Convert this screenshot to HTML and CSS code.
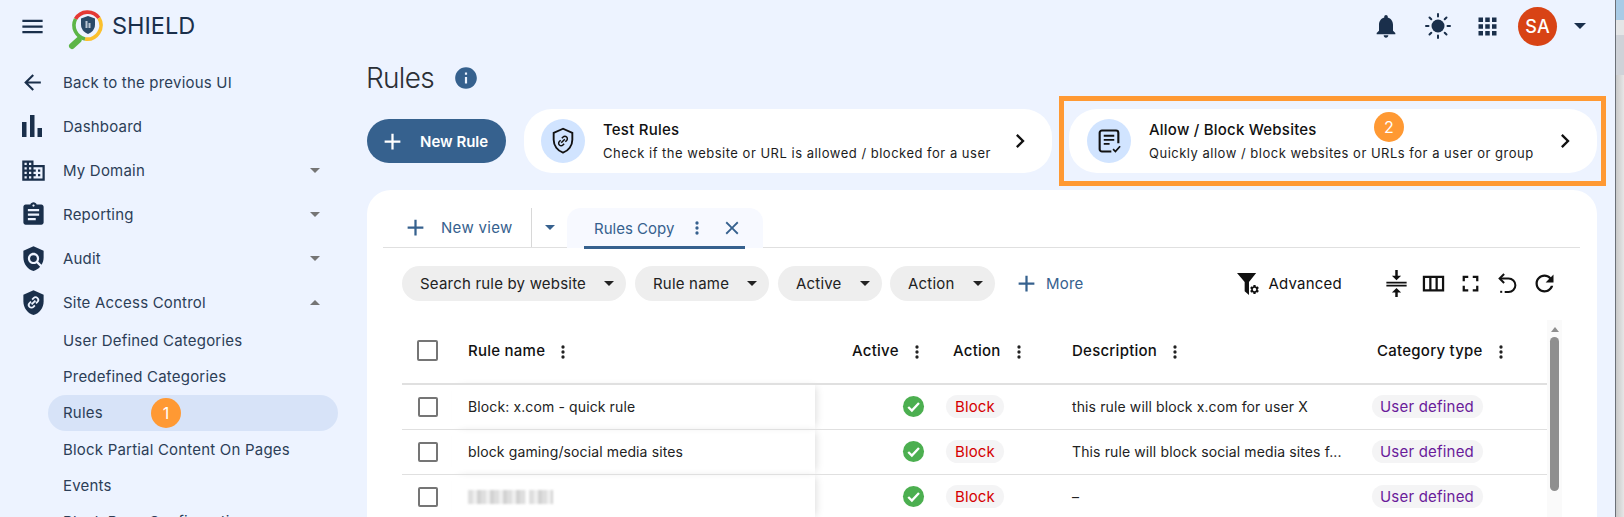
FILE: index.html
```html
<!DOCTYPE html>
<html lang="en">
<head>
<meta charset="utf-8">
<title>SHIELD - Rules</title>
<link rel="stylesheet" href="styles.css">
</head>
<body>
<svg class="defs" width="0" height="0" aria-hidden="true">
  <symbol id="i-plus" viewBox="0 0 24 24"><path d="M19 13h-6v6h-2v-6H5v-2h6V5h2v6h6v2z"/></symbol>
  <symbol id="i-kebab" viewBox="0 0 24 24"><circle cx="12" cy="6" r="2"/><circle cx="12" cy="12" r="2"/><circle cx="12" cy="18" r="2"/></symbol>
  <symbol id="i-chevron" viewBox="0 0 24 24"><path d="M10 6 8.59 7.41 13.17 12l-4.58 4.59L10 18l6-6z"/></symbol>
  <symbol id="i-check" viewBox="0 0 24 24"><circle cx="12" cy="12" r="11" fill="#4caf50"/><path d="M6.5 12.5l3.8 3.8 7.4-8" fill="none" stroke="#fff" stroke-width="2.4"/></symbol>
</svg>
<div class="screen">
  <div class="window">
    <header class="topbar">
      <svg class="ic-menu" viewBox="0 0 24 24"><path d="M3 18h18v-2H3v2zm0-5h18v-2H3v2zm0-7v2h18V6H3z"/></svg>
      <svg class="logo" viewBox="0 0 36 36">
        <path d="M11.6 31 5 37" stroke="#5cb547" stroke-width="6" stroke-linecap="round" fill="none"/>
        <path d="M8.5 10A14 14 0 0 1 32 9" stroke="#e53935" stroke-width="3.6" fill="none"/>
        <path d="M32 9A14 14 0 0 1 18 30" stroke="#fbc02d" stroke-width="3.6" fill="none"/>
        <path d="M18 30A14 14 0 0 1 8.5 10" stroke="#5cb547" stroke-width="3.6" fill="none"/>
        <path d="M21 7l7 2.6v6c0 4.500-3 8-7 9.500-4-1.500-7-5-7-9.500v-6z" fill="#2a4a68"/>
        <path d="M18.500 12h2v7h-2zM21.500 14h2v5h-2z" fill="#b9c6d4"/>
      </svg>
      <span class="brand">SHIELD</span>
      <div class="top-actions">
        <svg class="ic-bell" viewBox="0 0 24 24"><path d="M12 22c1.100 0 2-.9 2-2h-4c0 1.100.89 2 2 2zm6-6v-5c0-3.070-1.640-5.640-4.500-6.320V4c0-.83-.67-1.500-1.500-1.500s-1.500.67-1.500 1.500v.68C7.630 5.360 6 7.920 6 11v5l-2 2v1h16v-1l-2-2z"/></svg>
        <svg class="ic-sun" viewBox="0 0 26 26"><circle cx="13" cy="13" r="6.500"/><path d="M13 1v2.500M13 22.500V25M1 13h2.500M22.500 13H25M4.500 4.500l1.800 1.800M19.700 19.700l1.800 1.800M4.500 21.500l1.800-1.800M19.700 6.300l1.800-1.800" stroke="#1a2f4b" stroke-width="2" stroke-linecap="round"/></svg>
        <svg class="ic-apps" viewBox="0 0 24 24"><path d="M4 8h4V4H4v4zm6 12h4v-4h-4v4zm-6 0h4v-4H4v4zm0-6h4v-4H4v4zm6 0h4v-4h-4v4zm6-10v4h4V4h-4zm-6 4h4V4h-4v4zm6 6h4v-4h-4v4zm0 6h4v-4h-4v4z"/></svg>
        <span class="avatar">SA</span>
        <span class="caret caret-top"></span>
      </div>
    </header>
    <div class="body">
      <nav class="sidebar">
        <a class="nav-item"><svg class="nav-ic back" viewBox="0 0 24 24"><path d="M20 11H7.830l5.590-5.590L12 4l-8 8 8 8 1.410-1.410L7.830 13H20v-2z"/></svg><span>Back to the previous UI</span></a>
        <a class="nav-item"><svg class="nav-ic bars" viewBox="0 0 24 24"><path d="M2 7h4.500V22H2zM10 0h4.500V22H10zM17.500 13H22v9h-4.500z"/></svg><span>Dashboard</span></a>
        <a class="nav-item"><svg class="nav-ic" viewBox="0 0 24 24"><path d="M12 7V3H2v18h20V7H12zM6 19H4v-2h2v2zm0-4H4v-2h2v2zm0-4H4V9h2v2zm0-4H4V5h2v2zm4 12H8v-2h2v2zm0-4H8v-2h2v2zm0-4H8V9h2v2zm0-4H8V5h2v2zm10 12h-8v-2h2v-2h-2v-2h2v-2h-2V9h8v10zm-2-8h-2v2h2v-2zm0 4h-2v2h2v-2z"/></svg><span>My Domain</span><i class="caret"></i></a>
        <a class="nav-item"><svg class="nav-ic" viewBox="0 0 24 24"><path d="M19 3h-4.180C14.400 1.840 13.300 1 12 1c-1.300 0-2.400.84-2.820 2H5c-1.100 0-2 .9-2 2v14c0 1.100.9 2 2 2h14c1.100 0 2-.9 2-2V5c0-1.100-.9-2-2-2zm-7 0c.55 0 1 .45 1 1s-.45 1-1 1-1-.45-1-1 .45-1 1-1zm2 14H7v-2h7v2zm3-4H7v-2h10v2zm0-4H7V7h10v2z"/></svg><span>Reporting</span><i class="caret"></i></a>
        <a class="nav-item"><svg class="nav-ic" viewBox="0 0 24 24"><path d="M21 5l-9-4-9 4v6c0 5.550 3.840 10.740 9 12 2.300-.56 4.330-1.900 5.880-3.710l-3.120-3.120c-1.940 1.290-4.580 1.070-6.290-.64-1.950-1.950-1.950-5.120 0-7.070 1.950-1.950 5.120-1.950 7.070 0 1.710 1.710 1.920 4.350.64 6.290l2.900 2.900C20.290 15.690 21 13.380 21 11V5z"/><circle cx="12" cy="12" r="3"/></svg><span>Audit</span><i class="caret"></i></a>
        <a class="nav-item"><svg class="nav-ic" viewBox="0 0 24 24"><path d="M12 1 3 5v6c0 5.550 3.840 10.740 9 12 5.160-1.260 9-6.450 9-12V5z"/><path d="M9.800 11.200l-1.300 1.300a2.400 2.400 0 0 0 3.400 3.400l1.300-1.300M14.200 12.800l1.300-1.300a2.400 2.400 0 0 0-3.400-3.400l-1.300 1.300M10.300 13.700l3.400-3.400" fill="none" stroke="#edf3ff" stroke-width="1.600"/></svg><span>Site Access Control</span><i class="caret up"></i></a>
        <div class="subnav">
          <a class="sub-item">User Defined Categories</a>
          <a class="sub-item">Predefined Categories</a>
          <a class="sub-item active">Rules<b class="badge badge-one">1</b></a>
          <a class="sub-item">Block Partial Content On Pages</a>
          <a class="sub-item">Events</a>
          <a class="sub-item">Block Page Configuration</a>
        </div>
      </nav>
      <main class="main">
        <div class="title-row">
          <h1>Rules</h1>
          <svg class="ic-info" viewBox="0 0 24 24"><path d="M12 2C6.480 2 2 6.480 2 12s4.480 10 10 10 10-4.480 10-10S17.520 2 12 2zm1 15h-2v-6h2v6zm0-8h-2V7h2v2z"/></svg>
        </div>
        <div class="action-row">
          <button class="new-rule"><svg viewBox="0 0 24 24"><use href="#i-plus"/></svg>New Rule</button>
          <div class="promo promo-test">
            <span class="promo-ic"><svg viewBox="0 0 24 24"><path d="M12 1.500 4 5v6c0 5 3.300 9.500 8 11 4.700-1.500 8-6 8-11V5z" fill="none" stroke="#111" stroke-width="1.600"/><path d="M10 11.300l-1.100 1.100a2.100 2.100 0 0 0 3 3l1.100-1.100M14 12.700l1.100-1.100a2.100 2.100 0 0 0-3-3L11 9.700M10.500 13.500l3-3" fill="none" stroke="#111" stroke-width="1.300"/></svg></span>
            <div class="promo-text"><strong>Test Rules</strong><small>Check if the website or URL is allowed / blocked for a user</small></div>
            <svg class="promo-go" viewBox="0 0 24 24"><use href="#i-chevron"/></svg>
          </div>
          <div class="promo promo-allow">
            <span class="promo-ic"><svg viewBox="0 0 24 24"><path d="M14 21H6a2 2 0 0 1-2-2V5a2 2 0 0 1 2-2h12a2 2 0 0 1 2 2v9" fill="none" stroke="#111" stroke-width="1.800"/><path d="M7.500 7.500h9M7.500 11h9M7.500 14.500h5" stroke="#111" stroke-width="1.600" fill="none"/><path d="M15.500 19l2 2 4-4.500" fill="none" stroke="#111" stroke-width="1.500"/></svg></span>
            <div class="promo-text"><strong>Allow / Block Websites</strong><small>Quickly allow / block websites or URLs for a user or group</small></div>
            <svg class="promo-go" viewBox="0 0 24 24"><use href="#i-chevron"/></svg>
            <b class="badge badge-two">2</b>
            <span class="callout"></span>
          </div>
        </div>
        <section class="card">
          <div class="tabs">
            <button class="tab-new"><svg viewBox="0 0 24 24"><use href="#i-plus"/></svg>New view</button>
            <span class="tab-menu"><i class="caret caret-blue"></i></span>
            <div class="tab">
              <span class="tab-label">Rules Copy</span>
              <svg class="tab-kebab" viewBox="0 0 24 24"><use href="#i-kebab"/></svg>
              <svg class="tab-x" viewBox="0 0 24 24"><path d="M19 6.410 17.590 5 12 10.590 6.410 5 5 6.410 10.590 12 5 17.590 6.410 19 12 13.410 17.590 19 19 17.590 13.410 12z"/></svg>
            </div>
          </div>
          <div class="filters">
            <span class="chip chip-a">Search rule by website<i class="caret caret-dark"></i></span>
            <span class="chip chip-b">Rule name<i class="caret caret-dark"></i></span>
            <span class="chip chip-c">Active<i class="caret caret-dark"></i></span>
            <span class="chip chip-d">Action<i class="caret caret-dark"></i></span>
            <span class="more"><svg viewBox="0 0 24 24"><use href="#i-plus"/></svg>More</span>
            <span class="advanced">
              <svg class="ic-adv" viewBox="0 0 24 24"><path d="M0 1h20l-7.500 9.500V24L8 20v-9.500z"/><g transform="translate(12.500 12.500) scale(.48)"><path d="M19.140 12.940c.04-.3.06-.61.06-.94 0-.32-.02-.64-.07-.94l2.030-1.580c.18-.14.23-.41.12-.61l-1.920-3.320c-.12-.22-.37-.29-.59-.22l-2.390.96c-.5-.38-1.030-.7-1.620-.94l-.36-2.540c-.04-.24-.24-.41-.48-.41h-3.840c-.24 0-.43.17-.47.41l-.36 2.540c-.59.24-1.130.57-1.620.94l-2.390-.96c-.22-.08-.47 0-.59.22L2.740 8.870c-.12.21-.08.47.12.61l2.030 1.580c-.05.3-.09.63-.09.94s.02.64.07.94l-2.030 1.580c-.18.14-.23.41-.12.61l1.920 3.320c.12.22.37.29.59.22l2.390-.96c.5.38 1.030.7 1.620.94l.36 2.540c.05.24.24.41.48.41h3.840c.24 0 .44-.17.47-.41l.36-2.540c.59-.24 1.130-.56 1.620-.94l2.390.96c.22.08.47 0 .59-.22l1.920-3.320c.12-.22.07-.47-.12-.61l-2.010-1.580zM12 15.600c-1.980 0-3.600-1.620-3.600-3.600s1.620-3.600 3.600-3.600 3.600 1.620 3.600 3.600-1.620 3.600-3.600 3.600z"/></g></svg>
              Advanced
            </span>
            <div class="tools">
              <svg viewBox="0 0 24 24"><path d="M3 10.500h18v1.600H3zM3 13h18v1.600H3zM10.900 0h2.200v5h3l-4.100 4-4.100-4h3zM12 16l4.100 4h-3v4h-2.200v-4h-3z"/></svg>
              <svg viewBox="0 0 24 24"><path d="M2.500 5h19v14h-19zM4.500 7v10h3.700V7zm5.700 0v10h3.600V7zm5.600 0v10h3.700V7z" fill-rule="evenodd"/></svg>
              <svg viewBox="0 0 24 24"><path d="M7 14H5v5h5v-2H7v-3zm-2-4h2V7h3V5H5v5zm12 7h-3v2h5v-5h-2v3zM14 5v2h3v3h2V5h-5z"/></svg>
              <svg viewBox="0 0 24 24"><path d="M9 3.500 5 7.500l4 4" fill="none" stroke="#111" stroke-width="1.800"/><path d="M5.500 7.500H13a6 6 0 0 1 6 6 6 6 0 0 1-6 6H9.500" fill="none" stroke="#111" stroke-width="1.800"/><path d="M5.500 18.500h1.800v1.800H5.500z"/></svg>
              <svg viewBox="0 0 24 24"><path d="M17.650 6.350C16.200 4.900 14.210 4 12 4c-4.420 0-7.990 3.580-7.990 8s3.570 8 7.990 8c3.730 0 6.840-2.550 7.730-6h-2.080c-.82 2.330-3.040 4-5.650 4-3.310 0-6-2.690-6-6s2.690-6 6-6c1.660 0 3.140.69 4.220 1.780L13 11h7V4l-2.350 2.350z"/></svg>
            </div>
          </div>
          <div class="table-wrap">
            <table class="rules">
              <colgroup><col class="c1"><col class="c2"><col class="c3"><col class="c4"><col class="c5"><col class="c6"></colgroup>
              <thead>
                <tr>
                  <th><span class="box box-head"></span></th>
                  <th class="name"><span class="th">Rule name<svg viewBox="0 0 24 24"><use href="#i-kebab"/></svg></span></th>
                  <th class="active-col"><span class="th">Active<svg viewBox="0 0 24 24"><use href="#i-kebab"/></svg></span></th>
                  <th class="action-col"><span class="th">Action<svg viewBox="0 0 24 24"><use href="#i-kebab"/></svg></span></th>
                  <th class="desc-col"><span class="th">Description<svg viewBox="0 0 24 24"><use href="#i-kebab"/></svg></span></th>
                  <th class="cat-col"><span class="th">Category type<svg viewBox="0 0 24 24"><use href="#i-kebab"/></svg></span></th>
                </tr>
              </thead>
              <tbody>
                <tr>
                  <td><span class="box"></span></td>
                  <td class="name">Block: x.com - quick rule</td>
                  <td class="active-col"><svg class="ok" viewBox="0 0 24 24"><use href="#i-check"/></svg></td>
                  <td class="action-col"><span class="pill block">Block</span></td>
                  <td class="desc-col">this rule will block x.com for user X</td>
                  <td class="cat-col"><span class="pill user">User defined</span></td>
                </tr>
                <tr>
                  <td><span class="box"></span></td>
                  <td class="name">block gaming/social media sites</td>
                  <td class="active-col"><svg class="ok" viewBox="0 0 24 24"><use href="#i-check"/></svg></td>
                  <td class="action-col"><span class="pill block">Block</span></td>
                  <td class="desc-col">This rule will block social media sites f...</td>
                  <td class="cat-col"><span class="pill user">User defined</span></td>
                </tr>
                <tr>
                  <td><span class="box"></span></td>
                  <td class="name"><span class="mosaic"><i class="m1"></i><i class="m2"></i></span></td>
                  <td class="active-col"><svg class="ok" viewBox="0 0 24 24"><use href="#i-check"/></svg></td>
                  <td class="action-col"><span class="pill block">Block</span></td>
                  <td class="desc-col">–</td>
                  <td class="cat-col"><span class="pill user">User defined</span></td>
                </tr>
              </tbody>
            </table>
            <div class="scrollbar"><i class="arrow"></i><i class="thumb"></i></div>
          </div>
        </section>
      </main>
    </div>
  </div>
  <div class="edge"><i class="e1"></i><i class="e2"></i><i class="e3"></i><i class="e4"></i></div>
</div>
</body>
</html>
```
FILE: styles.css
```css
* { box-sizing: border-box; }
html, body { margin: 0; height: 517px; overflow: hidden; }
body { font-family: Inter, "Liberation Sans", sans-serif; color: #111; background: #edf3ff; }
.defs { position: absolute; }
button { font: inherit; border: 0; background: none; padding: 0; }
svg { display: block; flex: none; }

.screen { display: flex; height: 517px; }
.window { width: 1615px; height: 517px; overflow: hidden; background: #edf3ff; }
.edge { width: 9px; border-left: 1.5px solid #6b7078; display: flex; flex-direction: column; }
.edge .e1 { height: 20px; background: #a9cbe6; }
.edge .e2 { height: 15px; background: #e4e5e6; }
.edge .e3 { height: 40px; background: #cfd2d8; }
.edge .e4 { flex: 1; background: linear-gradient(90deg, #c9c9c9, #e6e6e6); }

.topbar { height: 52px; display: flex; align-items: center; padding-left: 19px; }
.topbar svg { fill: #1a2f4b; }
.ic-menu { width: 27px; height: 27px; }
.logo { width: 36px; height: 36px; margin-left: 21px; margin-top: 1px; overflow: visible; }
.brand { font-size: 23.5px; color: #1a2f4b; margin-left: 9px; line-height: 1; }
.top-actions { margin-left: auto; display: flex; align-items: center; padding-right: 29px; }
.ic-bell { width: 28px; height: 28px; margin-right: 24.5px; }
.ic-sun { width: 26px; height: 26px; margin-right: 23.5px; }
.ic-apps { width: 27px; height: 27px; margin-right: 17px; }
.avatar { width: 39px; height: 39px; border-radius: 50%; background: #d84315; color: #fff; font-size: 18px; font-weight: 500; display: flex; align-items: center; justify-content: center; margin-right: 17px; }

.caret { display: block; width: 0; height: 0; border-left: 5px solid transparent; border-right: 5px solid transparent; border-top: 5px solid #757575; }
.caret.up { border-top: 0; border-bottom: 5px solid #757575; }
.caret-top { border-left-width: 6px; border-right-width: 6px; border-top: 6px solid #1a2f4b; }
.caret-blue { border-top-color: #36618e; }
.caret-dark { border-top-color: #222; }

.body { display: flex; height: 465px; }
.sidebar { width: 367px; flex: none; padding-top: 8px; }
.nav-item { height: 44px; display: flex; align-items: center; padding: 0 48px 0 20px; font-size: 15px; letter-spacing: .2px; color: #2c3e57; }
.nav-item span { margin-left: 16px; }
.nav-item .caret { margin-left: auto; margin-right: -1px; }
.nav-ic { width: 27px; height: 27px; fill: #1a2f4b; }
.nav-ic.back { margin-left: 0; margin-right: 2px; width: 25px; height: 25px; }
.nav-ic.bars { width: 24px; height: 24px; margin-left: 0; margin-right: 3px; margin-top: 1px; }
.subnav { margin-top: -1px; }
.sub-item { position: relative; display: flex; align-items: center; height: 36px; margin: 0 29px 0 48px; padding: 0 0 1px 15px; border-radius: 18px; font-size: 15px; letter-spacing: .2px; color: #2c3e57; white-space: nowrap; }
.sub-item.active { background: #d7e3f8; margin-bottom: 1px; }
.badge { position: absolute; width: 30px; height: 30px; border-radius: 50%; background: #ff9933; color: #fff; font-weight: 400; font-size: 16px; display: flex; align-items: center; justify-content: center; }
.badge-one { left: 103px; top: 3px; }
.badge-two { left: 305px; top: 3px; }

.main { flex: 1; min-width: 0; padding-right: 18px; }
.title-row { height: 57px; display: flex; align-items: center; padding-bottom: 6px; }
h1 { margin: 0 0 0 -1px; font-size: 28px; font-weight: 300; color: #2b2f36; letter-spacing: -.7px; }
.ic-info { width: 26px; height: 26px; fill: #36618e; margin-left: 19px; }

.action-row { display: flex; align-items: center; height: 64px; }
.new-rule { width: 139px; height: 44px; border-radius: 22px; background: #36618e; color: #fff; font-size: 15px; font-weight: 600; display: flex; align-items: center; padding-left: 12px; flex: none; }
.new-rule svg { width: 27px; height: 27px; fill: #fff; margin-right: 14px; }
.promo { position: relative; height: 64px; border-radius: 28px; background: #fff; display: flex; align-items: center; }
.promo-test { width: 528px; margin-left: 18px; padding-left: 17px; }
.promo-allow { width: 528px; margin-left: 17px; padding-left: 18px; }
.promo-ic { width: 44px; height: 44px; border-radius: 50%; background: #d1e4ff; display: flex; align-items: center; justify-content: center; flex: none; }
.promo-ic svg { width: 28px; height: 28px; }
.promo-text { margin-left: 18px; padding-top: 1px; display: flex; flex-direction: column; gap: 6px; flex: 1; white-space: nowrap; }
.promo-text strong { font-size: 15px; font-weight: 500; line-height: 18px; letter-spacing: .22px; color: #111; }
.promo-text small { font-size: 13px; letter-spacing: .5px; line-height: 17px; color: #1c1c1c; }
.promo-go { width: 28px; height: 28px; margin-right: 18px; fill: #111; }
.callout { position: absolute; left: -10px; right: -9px; top: -13px; bottom: -13px; border: 5px solid #ff9933; pointer-events: none; }

.card { margin-top: 17px; height: 340px; background: #fff; border-radius: 24px 24px 0 0; padding: 18px 17px 0 16px; }
.tabs { display: flex; height: 40px; border-bottom: 1.5px solid #e0e0e0; }
.tab-new { display: flex; align-items: center; width: 149px; padding-left: 20px; color: #36618e; font-size: 15px; letter-spacing: .3px; border-right: 1.5px solid #d8d8d8; }
.tab-new svg { width: 27px; height: 27px; fill: #36618e; margin-right: 12px; margin-left: -1px; }
.tab-menu { width: 35px; display: flex; align-items: center; justify-content: center; }
.tab { position: relative; width: 196px; height: 40px; background: #f7f9ff; border-radius: 14px 14px 0 0; display: flex; align-items: center; padding-left: 27px; color: #36618e; font-size: 15px; }
.tab::after { content: ""; position: absolute; left: 17px; width: 161px; bottom: -1px; height: 3px; background: #36618e; }
.tab-kebab { width: 20px; height: 20px; fill: #36618e; margin-left: 13px; }
.tab-x { width: 22px; height: 22px; fill: #36618e; margin-left: 14px; }

.filters { display: flex; align-items: center; height: 35px; margin: 18px 0 0 19px; }
.chip { height: 35px; border-radius: 18px; background: #eeeeee; display: flex; align-items: center; justify-content: space-between; padding: 0 12px 0 18px; font-size: 15px; letter-spacing: .2px; color: #222; margin-right: 9px; }
.chip-a { width: 224px; }
.chip-b { width: 134px; }
.chip-c { width: 104px; margin-right: 8px; }
.chip-d { width: 105px; }
.more { display: flex; align-items: center; color: #36618e; font-size: 15px; margin-left: 9px; letter-spacing: .2px; }
.more svg { width: 27px; height: 27px; fill: #36618e; margin-right: 6px; }
.advanced { display: flex; align-items: center; margin-left: 153px; font-size: 15px; letter-spacing: .2px; color: #111; }
.ic-adv { width: 23px; height: 23px; margin-right: 9px; fill: #111; }
.tools { display: flex; align-items: center; margin-left: 41px; gap: 10px; }
.tools svg { width: 27px; height: 27px; fill: #111; }

.table-wrap { display: flex; align-items: flex-start; margin: 19px 0 0 19px; width: 1160px; height: 216px; }
.rules { width: 1145px; flex: none; table-layout: fixed; border-collapse: collapse; font-size: 14px; letter-spacing: .12px; }
.c1 { width: 50px; }
.c2 { width: 363px; }
.c3 { width: 123px; }
.c4 { width: 127px; }
.c5 { width: 300px; }
.c6 { width: 182px; }
.rules th { height: 64px; border-bottom: 2px solid #e0e0e0; font-weight: 500; font-size: 15px; letter-spacing: .25px; text-align: left; padding: 0 0 2px; color: #111; }
.rules td { height: 45px; border-bottom: 1px solid #e0e0e0; padding: 0; color: #222; white-space: nowrap; }
.th { display: flex; align-items: center; }
.th svg { width: 20px; height: 20px; fill: #222; margin-left: 8px; margin-top: 2px; }
.box { display: block; width: 20px; height: 20px; margin-left: 16px; border: 2px solid #757575; border-radius: 2px; }
.box-head { width: 21px; height: 21px; margin-left: 15px; }
.name { padding-left: 16px !important; }
td.name { box-shadow: 4px 0 8px -3px rgba(0,0,0,.14); }
th.active-col { padding-left: 37px; }
td.active-col { padding-left: 87px; }
th.action-col { padding-left: 15px; }
td.action-col { padding-left: 8px; }
.desc-col { padding-left: 7px !important; }
th.cat-col { padding-left: 12px; }
td.cat-col { padding-left: 7px; }
.ok { width: 23px; height: 23px; }
.pill { display: inline-block; height: 23px; line-height: 23px; border-radius: 12px; background: #f4f4f5; font-size: 15px; padding: 0 9px; }
.block { color: #d50000; }
.user { color: #6a1b9a; letter-spacing: .2px; padding: 0 9px 0 8px; }
.mosaic { display: flex; gap: 3px; height: 14px; filter: blur(1px); }
.mosaic i { display: block; height: 14px; background: repeating-linear-gradient(90deg, #dedede 0 5px, #f0f0f0 5px 9px, #d2d2d2 9px 13px); }
.m1 { width: 58px; }
.m2 { width: 24px; }

.scrollbar { width: 15px; height: 216px; flex: none; background: #fafafa; position: relative; display: flex; flex-direction: column; align-items: center; padding-top: 7px; }
.arrow { width: 0; height: 0; border-left: 4px solid transparent; border-right: 4px solid transparent; border-bottom: 5px solid #8f8f8f; }
.thumb { width: 9px; height: 154px; border-radius: 5px; background: #8f8f8f; margin-top: 5px; }
```
